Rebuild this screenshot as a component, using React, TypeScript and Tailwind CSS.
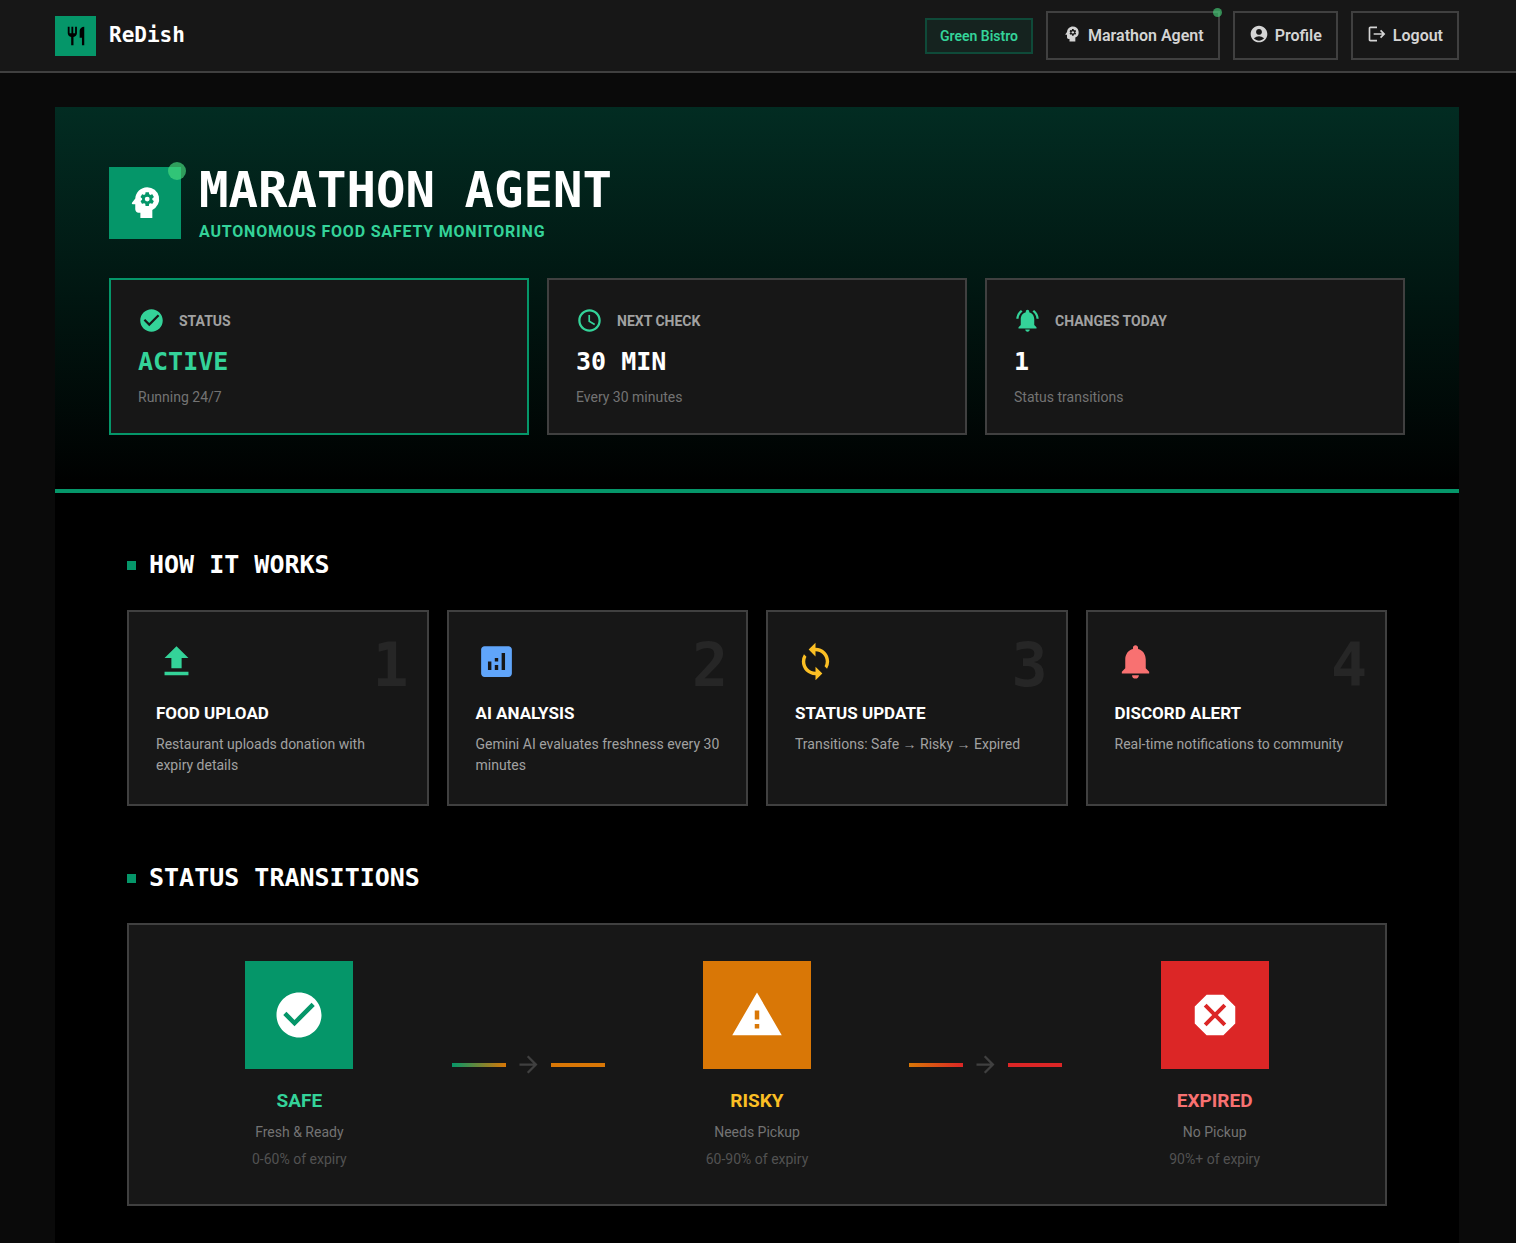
import type { ReactNode } from "react";
import type { IconType } from "react-icons";
import {
  MdAccessTime,
  MdAccountCircle,
  MdAnalytics,
  MdArrowForward,
  MdCheckCircle,
  MdDangerous,
  MdFileUpload,
  MdLogout,
  MdNotifications,
  MdNotificationsActive,
  MdPsychology,
  MdRestaurant,
  MdSync,
  MdWarning,
} from "react-icons/md";

const mono = "font-['DejaVu_Sans_Mono',monospace] font-bold";

function NavButton({ icon: Icon, label, dot }: { icon: IconType; label: string; dot?: boolean }) {
  return (
    <button
      type="button"
      className="relative flex h-[49px] items-center gap-[6px] border-2 border-neutral-700 px-[14px] text-base font-semibold text-neutral-300"
    >
      <Icon className="mb-[3px] size-5" aria-hidden />
      {label}
      {dot && <span className="absolute -top-[5px] -right-1 size-[9px] rounded-full bg-[#4ade80] opacity-60" />}
    </button>
  );
}

type Stat = { icon: IconType; label: string; value: string; note: string; active?: boolean };

const stats: Stat[] = [
  { icon: MdCheckCircle, label: "STATUS", value: "ACTIVE", note: "Running 24/7", active: true },
  { icon: MdAccessTime, label: "NEXT CHECK", value: "30 MIN", note: "Every 30 minutes" },
  { icon: MdNotificationsActive, label: "CHANGES TODAY", value: "1", note: "Status transitions" },
];

function StatCard({ icon: Icon, label, value, note, active }: Stat) {
  return (
    <div className={`border-2 bg-neutral-900 p-[27px] ${active ? "border-[#059669]" : "border-neutral-700"}`}>
      <div className="flex items-center gap-[14px]">
        <Icon className="size-[27px] text-[#34d399]" aria-hidden />
        <span className="text-sm font-bold text-neutral-400">{label}</span>
      </div>
      <p className={`${mono} mt-[9px] text-[25px] leading-[38px] ${active ? "text-[#34d399]" : "text-white"}`}>
        {value}
      </p>
      <p className="mt-[7px] text-sm leading-[18px] text-neutral-500">{note}</p>
    </div>
  );
}

const steps = [
  { icon: MdFileUpload, color: "text-[#34d399]", title: "FOOD UPLOAD", text: "Restaurant uploads donation with expiry details" },
  { icon: MdAnalytics, color: "text-[#60a5fa]", title: "AI ANALYSIS", text: "Gemini AI evaluates freshness every 30 minutes" },
  { icon: MdSync, color: "text-[#fbbf24]", title: "STATUS UPDATE", text: "Transitions: Safe → Risky → Expired" },
  { icon: MdNotifications, color: "text-[#f87171]", title: "DISCORD ALERT", text: "Real-time notifications to community" },
];

function SectionHeading({ children }: { children: ReactNode }) {
  return (
    <h2 className={`${mono} flex items-center gap-[13px] text-[25px] leading-[36px] text-white`}>
      <span className="size-[9px] bg-[#059669]" />
      {children}
    </h2>
  );
}

type Stage = { icon: IconType; tile: string; color: string; name: string; note: string; range: string };

function StageColumn({ icon: Icon, tile, color, name, note, range }: Stage) {
  return (
    <div className="flex flex-1 flex-col items-center text-center">
      <div className={`flex size-[108px] items-center justify-center ${tile}`}>
        <Icon className="size-[54px] text-white" aria-hidden />
      </div>
      <h3 className={`mt-[18px] text-[19px] leading-[27px] font-bold ${color}`}>{name}</h3>
      <p className="mt-[9px] text-sm leading-[18px] text-neutral-500">{note}</p>
      <p className="mt-[9px] text-sm leading-[18px] text-neutral-600">{range}</p>
    </div>
  );
}

function Connector({ from, to }: { from: string; to: string }) {
  return (
    <div className="flex items-center gap-[9px] px-[18px]">
      <span className={`h-1 w-[54px] bg-linear-to-r/srgb ${from}`} />
      <MdArrowForward className="size-[27px] text-neutral-700" aria-hidden />
      <span className={`h-1 w-[54px] ${to}`} />
    </div>
  );
}

export default function App() {
  return (
    <div className="flex min-h-screen flex-col bg-[#0a0a0a] font-[Roboto,sans-serif]">
      <header className="flex h-[73px] items-center justify-between border-b-2 border-neutral-700 bg-neutral-900 pr-[57px] pl-[55px]">
        <a href="#" className="flex items-center gap-[13px]">
          <span className="flex h-10 w-[41px] items-center justify-center bg-[#059669]">
            <MdRestaurant className="size-[22px] text-black" aria-hidden />
          </span>
          <span className={`${mono} text-[21px] text-white`}>ReDish</span>
        </a>
        <nav className="flex items-center gap-[13px]">
          <span className="flex h-9 items-center border-2 border-[#059669]/35 bg-[#059669]/10 px-[13px] text-sm font-semibold text-[#34d399]">
            Green Bistro
          </span>
          <NavButton icon={MdPsychology} label="Marathon Agent" dot />
          <NavButton icon={MdAccountCircle} label="Profile" />
          <NavButton icon={MdLogout} label="Logout" />
        </nav>
      </header>

      <main className="mt-[34px] mr-[57px] ml-[55px] flex-1 bg-black">
        <section className="border-b-4 border-[#059669] bg-linear-to-b/srgb from-[#022c22] to-black p-[54px]">
          <div className="flex items-center gap-[18px]">
            <div className="relative flex size-[72px] items-center justify-center bg-[#059669]">
              <MdPsychology className="size-[41px] text-white" aria-hidden />
              <span className="absolute -top-[5px] -right-[5px] size-[18px] rounded-full bg-[#4ade80] opacity-65" />
            </div>
            <div>
              <h1 className={`${mono} text-[49px] leading-[59px] text-white`}>MARATHON AGENT</h1>
              <p className="text-base leading-[24px] font-bold tracking-wider text-[#34d399]">
                AUTONOMOUS FOOD SAFETY MONITORING
              </p>
            </div>
          </div>
          <div className="mt-[34px] grid grid-cols-3 gap-[18px]">
            {stats.map((s) => (
              <StatCard key={s.label} {...s} />
            ))}
          </div>
        </section>

        <div className="flex flex-col gap-[54px] px-[72px] pt-[54px] pb-[37px]">
          <section>
            <SectionHeading>HOW IT WORKS</SectionHeading>
            <ol className="mt-[27px] grid grid-cols-4 gap-[18px]">
              {steps.map(({ icon: Icon, color, title, text }, i) => (
                <li
                  key={title}
                  className="relative border-2 border-neutral-700 bg-neutral-900 pt-[27px] pr-[24px] pb-[28px] pl-[27px]"
                >
                  <span className={`${mono} absolute top-[23px] right-[18px] text-[60px] leading-none text-neutral-800`}>
                    {i + 1}
                  </span>
                  <div className="flex h-[45px] items-center">
                    <Icon className={`size-[41px] ${color}`} aria-hidden />
                  </div>
                  <h3 className="mt-[18px] text-[17px] leading-[23px] font-bold text-white">{title}</h3>
                  <p className="mt-[9px] text-sm leading-[21px] text-neutral-400">{text}</p>
                </li>
              ))}
            </ol>
          </section>

          <section>
            <SectionHeading>STATUS TRANSITIONS</SectionHeading>
            <div className="mt-[27px] flex items-center border-2 border-neutral-700 bg-neutral-900 p-[36px]">
              <StageColumn
                icon={MdCheckCircle}
                tile="bg-[#059669]"
                color="text-[#34d399]"
                name="SAFE"
                note="Fresh & Ready"
                range="0-60% of expiry"
              />
              <Connector from="from-[#059669] to-[#d97706]" to="bg-[#d97706]" />
              <StageColumn
                icon={MdWarning}
                tile="bg-[#d97706]"
                color="text-[#fbbf24]"
                name="RISKY"
                note="Needs Pickup"
                range="60-90% of expiry"
              />
              <Connector from="from-[#d97706] to-[#dc2626]" to="bg-[#dc2626]" />
              <StageColumn
                icon={MdDangerous}
                tile="bg-[#dc2626]"
                color="text-[#f87171]"
                name="EXPIRED"
                note="No Pickup"
                range="90%+ of expiry"
              />
            </div>
          </section>
        </div>
      </main>
    </div>
  );
}
